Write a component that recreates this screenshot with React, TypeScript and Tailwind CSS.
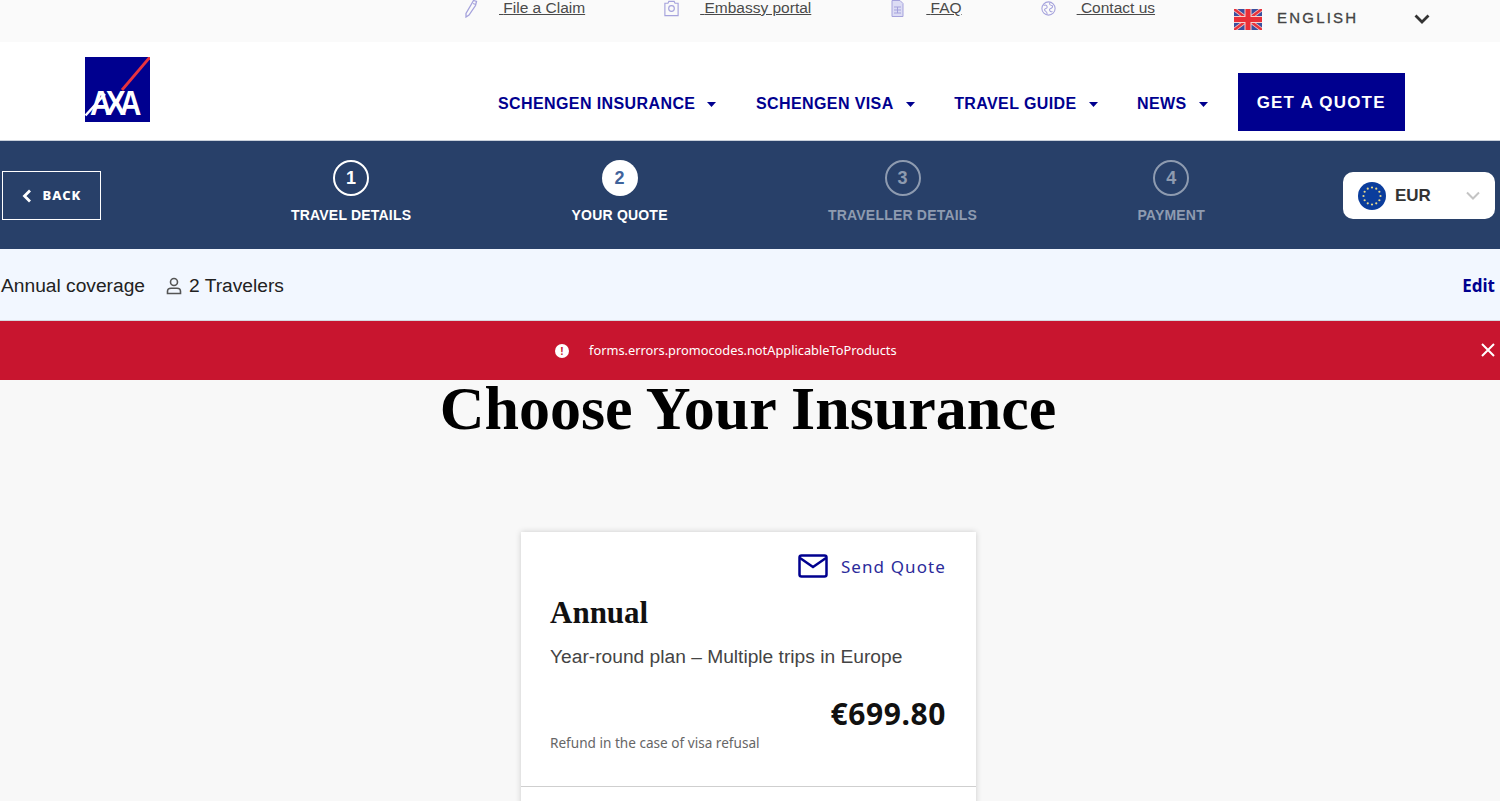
import React from 'react';

const NAV_ITEMS = ['SCHENGEN INSURANCE', 'SCHENGEN VISA', 'TRAVEL GUIDE', 'NEWS'];

const STEPS = [
  { n: 1, label: 'TRAVEL DETAILS', state: 'done' },
  { n: 2, label: 'YOUR QUOTE', state: 'active' },
  { n: 3, label: 'TRAVELLER DETAILS', state: 'todo' },
  { n: 4, label: 'PAYMENT', state: 'todo' },
];

function PenIcon() {
  return (
    <svg width="14" height="18" viewBox="0 0 14 18" fill="none" stroke="#a5a2dc" strokeWidth="1.300">
      <path d="M9.500 0.500l3 1-1 4-6.500 9.500-3 2 0-3.500 5.500-9.500z" />
      <path d="M9 3.500l2.800 1" />
    </svg>
  );
}

function CameraIcon() {
  return (
    <svg width="17" height="17" viewBox="0 0 17 17" fill="none" stroke="#a5a2dc" strokeWidth="1.300">
      <path d="M1 2.500h3.500l1-2h6l1 2H16v14H1z" />
      <circle cx="8.500" cy="8.500" r="3.200" />
    </svg>
  );
}

function DocIcon() {
  return (
    <svg width="13" height="17" viewBox="0 0 13 17" fill="#dcdcf4" stroke="#a5a2dc" strokeWidth="1">
      <path d="M1 0.500h8l3 3v13H1z" />
      <path d="M3 7h7M3 10h7M3 13h7M6.500 7v6" />
    </svg>
  );
}

function GlobeIcon() {
  return (
    <svg width="17" height="17" viewBox="0 0 17 17" fill="none" stroke="#a5a2dc" strokeWidth="1.200">
      <circle cx="8.500" cy="8.500" r="7.500" />
      <path d="M3 5c2-1 4 0 4 2s-3 1-3 3 3 1 3 5M10 2c-1 2 1 3 2 3s2 2 0 3-3 1-2 3 2 1 3 1" />
    </svg>
  );
}

function UkFlag() {
  return (
    <svg width="28" height="21" viewBox="0 0 28 21">
      <rect width="28" height="21" fill="#3a4f9f" />
      <path d="M0 0l28 21M28 0L0 21" stroke="#f3c4c4" strokeWidth="4" />
      <path d="M0 0l28 21M28 0L0 21" stroke="#e8323c" strokeWidth="2.400" />
      <path d="M14 0v21M0 10.500h28" stroke="#f6d0d0" strokeWidth="7" />
      <path d="M14 0v21M0 10.500h28" stroke="#ea2f38" strokeWidth="5" />
    </svg>
  );
}

function EuFlag() {
  const stars = Array.from({ length: 12 }, (_, i) => {
    const a = (i * Math.PI) / 6;
    return { x: 14 + 8.5 * Math.cos(a), y: 14 + 8.5 * Math.sin(a) };
  });
  return (
    <svg width="28" height="28" viewBox="0 0 28 28">
      <circle cx="14" cy="14" r="14" fill="#0b3d9c" />
      {stars.map((s, i) => (
        <circle key={i} cx={s.x} cy={s.y} r="1.100" fill="#e8d98a" />
      ))}
    </svg>
  );
}

function AxaLogo() {
  return (
    <svg width="65" height="65" viewBox="0 0 65 65" className="shrink-0">
      <rect width="65" height="65" fill="#00008f" />
      <path d="M65 0L37 33" stroke="#e8333f" strokeWidth="2.800" />
      <path d="M0.500 58.500L20 37" stroke="#fff" strokeWidth="2.400" />
      <text transform="translate(5 58) scale(1 1.150)" fill="#fff" fontSize="30" fontWeight="700" letterSpacing="-6" fontFamily="'Liberation Sans', sans-serif">AXA</text>
    </svg>
  );
}

function Caret() {
  return (
    <svg width="9" height="5" viewBox="0 0 9 5" fill="#00008f" className="ml-3 mt-[1px]">
      <path d="M0 0h9L4.500 5z" />
    </svg>
  );
}

function TopLink({ icon, text }: { icon: React.ReactNode; text: string }) {
  return (
    <div className="flex items-start">
      <div className="flex h-[17px] w-[15px] items-center justify-center">{icon}</div>
      <a className="ml-[21px] text-[15.500px] leading-[16px] text-[#4a4a4a] underline">&nbsp;{text}</a>
    </div>
  );
}

export default function App() {
  return (
    <div className="h-[801px] w-[1500px] overflow-hidden bg-[#f8f8f8] font-['Liberation_Sans',sans-serif]">
      {/* top links */}
      <div className="flex h-[42px] items-start bg-[#fafafa] pl-[463px]">
        <div className="flex gap-[79px]">
          <TopLink icon={<PenIcon />} text="File a Claim" />
          <TopLink icon={<CameraIcon />} text="Embassy portal" />
          <TopLink icon={<DocIcon />} text="FAQ" />
          <TopLink icon={<GlobeIcon />} text="Contact us" />
        </div>
        <div className="ml-[79px] mt-[9px] flex h-[21px] items-center">
          <UkFlag />
          <span className="mb-[4px] ml-[15px] text-[15px] leading-[21px] tracking-[2.200px] text-[#444] [-webkit-text-stroke:0.300px_#444]">ENGLISH</span>
          <svg width="16" height="10" viewBox="0 0 16 10" fill="none" stroke="#333" strokeWidth="2.800" className="mb-[1px] ml-[56px]">
            <path d="M1.500 1.500L8 8l6.500-6.500" />
          </svg>
        </div>
      </div>

      {/* main nav */}
      <div className="flex h-[98px] items-start bg-white pl-[85px]">
        <div className="mt-[15px]">
          <AxaLogo />
        </div>
        <div className="ml-[348px] mt-[52px] flex gap-[39.500px]">
          {NAV_ITEMS.map(item => (
            <div key={item} className="flex items-center text-[16px] font-bold leading-5 tracking-[0.400px] text-[#00008f]">
              {item}
              <Caret />
            </div>
          ))}
        </div>
        <button className="ml-[30px] mt-[31px] h-[58px] w-[167px] bg-[#00008f] pt-[1px] text-[17px] font-bold tracking-[1.200px] text-white">
          GET A QUOTE
        </button>
      </div>

      {/* steps */}
      <div className="flex h-[109px] border-t border-[#c9d0db] bg-[#284069]">
        <button className="ml-[2px] mt-[30px] flex h-[49px] w-[99px] items-center justify-center border border-white font-['Noto_Sans',sans-serif] text-[13px] font-extrabold tracking-[1px] text-white">
          <svg width="10" height="14" viewBox="0 0 10 14" fill="none" stroke="#fff" strokeWidth="2.800" className="mr-[11px]">
            <path d="M8 1.500L2.500 7 8 12.500" />
          </svg>
          BACK
        </button>
        <div className="ml-[190px] mt-[19px] flex gap-[160.300px]">
          {STEPS.map(s => (
            <div key={s.n} className="flex flex-col items-center">
              <div
                className={
                  s.state === 'done'
                    ? 'flex h-9 w-9 items-center justify-center rounded-full border-2 border-white text-[18px] font-bold text-white'
                    : s.state === 'active'
                      ? 'flex h-9 w-9 items-center justify-center rounded-full bg-white text-[18px] font-bold text-[#3f639b]'
                      : 'flex h-9 w-9 items-center justify-center rounded-full border-2 border-[#8e9bb0] text-[18px] font-bold text-[#8e9bb0]'
                }
              >
                {s.n}
              </div>
              <div className={s.state === 'todo' ? 'mt-[10px] text-[14px] font-bold leading-[18px] tracking-[0.200px] text-[#8e9bb0]' : 'mt-[10px] text-[14px] font-bold leading-[18px] tracking-[0.200px] text-white'}>
                {s.label}
              </div>
            </div>
          ))}
        </div>
        <div className="ml-auto mr-[5px] mt-[31px] flex h-[47px] w-[152px] items-center rounded-[10px] bg-white pl-[15px]">
          <EuFlag />
          <span className="ml-[9px] text-[17px] font-bold text-[#333]">EUR</span>
          <svg width="14" height="9" viewBox="0 0 14 9" fill="none" stroke="#c4c4c4" strokeWidth="2" className="ml-[35px]">
            <path d="M1 1.500L7 7.500l6-6" />
          </svg>
        </div>
      </div>

      {/* summary */}
      <div className="flex h-[72px] items-center border-b border-[#d5d8de] bg-[#f2f7ff] pl-[1px] pr-[5px] pt-[3px] text-[19.200px] text-[#222]">
        <span>Annual coverage</span>
        <svg width="16" height="18" viewBox="0 0 16 18" fill="none" stroke="#555" strokeWidth="1.600" className="ml-[21px]">
          <circle cx="8" cy="5" r="3.500" />
          <path d="M1.500 16.500v-2c0-2 1.500-3.200 3.500-3.200h6c2 0 3.500 1.200 3.500 3.200v2z" />
        </svg>
        <span className="ml-[7px]">2 Travelers</span>
        <a className="ml-auto font-['Noto_Sans',sans-serif] text-[17px] font-bold text-[#00008f]">Edit</a>
      </div>

      {/* error */}
      <div className="relative flex h-[59px] items-center bg-[#c8152f] pl-[555px] pt-[1px] font-['Noto_Sans',sans-serif] text-[12.800px] text-white">
        <div className="flex h-[14px] w-[14px] items-center justify-center rounded-full bg-white text-[10px] font-bold leading-none text-[#c8152f]">!</div>
        <span className="ml-[20px]">forms.errors.promocodes.notApplicableToProducts</span>
        <svg width="14" height="14" viewBox="0 0 14 14" stroke="#fff" strokeWidth="2" className="absolute right-[5px] top-[22px]">
          <path d="M1 1l12 12M13 1L1 13" />
        </svg>
      </div>

      {/* content */}
      <h1 className="pr-[4px] text-center font-['Liberation_Serif',serif] text-[62px] font-bold leading-[56px] text-black">
        Choose Your Insurance
      </h1>

      <div className="ml-[521px] mt-[96px] w-[455px] bg-white shadow-[0_0_6px_rgba(0,0,0,0.18)]">
        <div className="border-b border-[#cfcfcf] pb-[33px] pl-[29px] pr-[30px] pt-[22px]">
          <div className="flex items-center justify-end">
            <svg width="30" height="25" viewBox="0 0 30 25" fill="none" stroke="#00008f" strokeWidth="2.500">
              <rect x="1.500" y="1.500" width="27" height="21" rx="2" />
              <path d="M2 4l13 9 13-9" />
            </svg>
            <span className="ml-[13px] font-['Noto_Sans',sans-serif] text-[17px] tracking-[1.100px] text-[#2b2b9b]">Send Quote</span>
          </div>
          <div className="mt-[14px] font-['Liberation_Serif',serif] text-[31px] font-bold leading-[38px] text-[#111]">Annual</div>
          <div className="mt-[13px] text-[19.200px] leading-6 text-[#444]">Year-round plan – Multiple trips in Europe</div>
          <div className="mt-[25px] text-right font-['Noto_Sans',sans-serif] text-[30px] font-bold leading-[39px] tracking-[0.600px] text-[#111]">€699.80</div>
          <div className="font-['Noto_Sans',sans-serif] text-[13.600px] leading-[20px] text-[#666]">Refund in the case of visa refusal</div>
        </div>
        <div className="h-[40px]" />
      </div>
    </div>
  );
}
